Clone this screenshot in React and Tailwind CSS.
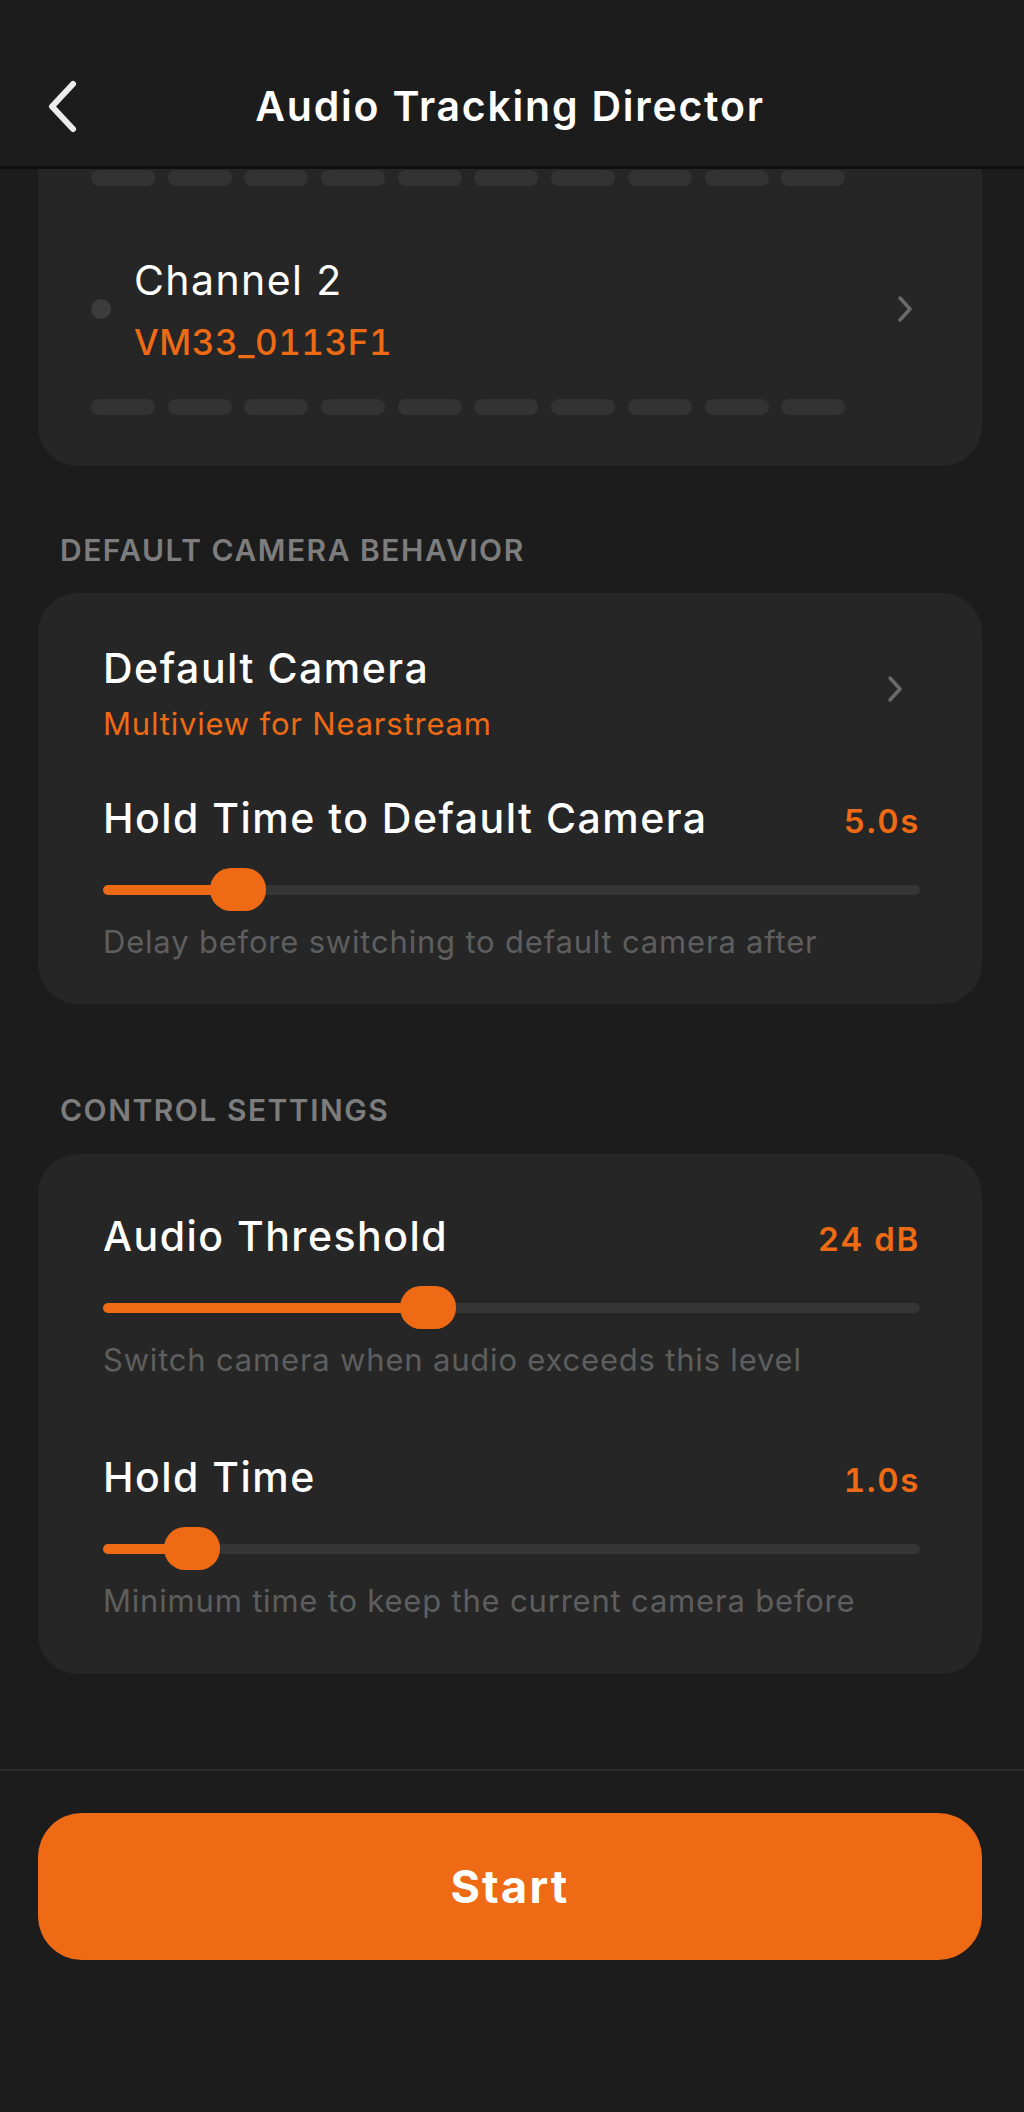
import React from 'react';

const Chevron = ({ className = '' }) => (
  <svg width="18" height="28" viewBox="0 0 18 28" className={className} fill="none">
    <path d="M4 3 L14 14 L4 25" stroke="#6a6a6a" strokeWidth="3.5" strokeLinecap="round" strokeLinejoin="round" />
  </svg>
);

const Dashes = () => (
  <div className="flex gap-[12.7px]">
    {Array.from({ length: 10 }).map((_, i) => (
      <div key={i} className="h-[16px] w-[64px] rounded-[8px] bg-[#333333]" />
    ))}
  </div>
);

const Slider = ({ percent }) => (
  <div className="relative h-[44px] w-full">
    <div className="absolute left-0 right-0 top-[17px] h-[10px] rounded-full bg-[#353535]" />
    <div className="absolute left-0 top-[17px] h-[10px] rounded-full bg-[#ee6a14]" style={{ width: `${percent}%` }} />
    <div
      className="absolute top-0 h-[43px] w-[56px] -translate-x-1/2 rounded-[21px] bg-[#ee6a14]"
      style={{ left: `${percent}%` }}
    />
  </div>
);

const SliderSetting = ({ title, value, percent, hint, className = '' }) => (
  <div className={className}>
    <div className="flex items-baseline justify-between">
      <span className="text-[41px] leading-[48px] font-medium tracking-[0.036em] text-white">{title}</span>
      <span className="text-[33px] leading-[40px] font-semibold tracking-[0.05em] tabular-nums text-[#ee6a14]">{value}</span>
    </div>
    <div className="mt-[26px]">
      <Slider percent={percent} />
    </div>
    <p className="mt-[12px] text-[31px] leading-[36px] tracking-[0.026em] text-[#5e5e5e]">{hint}</p>
  </div>
);

const SectionLabel = ({ children, className = '' }) => (
  <div className={`ml-[22px] text-[30px] leading-[34px] font-semibold tracking-[0.05em] text-[#7d7d7d] ${className}`}>
    {children}
  </div>
);

export default function App() {
  return (
    <div
      className="min-h-[2112px] w-full bg-[#1c1c1c] text-white"
      style={{ fontFamily: 'Inter, "Noto Sans", sans-serif' }}
    >
      {/* top bar */}
      <header className="grid h-[169px] grid-cols-[1fr_auto_1fr] items-center border-b-[3px] border-[#101010] pt-[45px] pr-[4px]">
        <div className="pl-[40px]">
          <svg width="40" height="60" viewBox="0 0 40 60" fill="none">
            <path d="M33 8 L12 30.5 L33 53" stroke="#ececec" strokeWidth="6" strokeLinecap="round" strokeLinejoin="round" />
          </svg>
        </div>
        <h1 className="text-[41px] leading-[48px] font-semibold tracking-[0.043em] text-white">Audio Tracking Director</h1>
        <div />
      </header>

      <main className="ml-[38px] mr-[42px] pb-[95px]">
        {/* channel card, scrolled partly under header */}
        <div className="rounded-b-[40px] bg-[#262626] pt-[1px] pb-[51px] pl-[53px] pr-[68px]">
          <Dashes />
          <div className="mt-[70px] flex items-center justify-between">
            <div className="flex items-center gap-[23px]">
              <div className="h-[20px] w-[20px] rounded-full bg-[#3c3c3c]" />
              <div>
                <div className="text-[41px] leading-[48px] tracking-[0.034em] text-white">Channel 2</div>
                <div className="mt-[18px] text-[35px] leading-[40px] font-medium tracking-[0.015em] tabular-nums text-[#ee6a14]">
                  VM33_0113F1
                </div>
              </div>
            </div>
            <Chevron />
          </div>
          <div className="mt-[37px]">
            <Dashes />
          </div>
        </div>

        <SectionLabel className="mt-[67px]">DEFAULT CAMERA BEHAVIOR</SectionLabel>

        <div className="mt-[26px] rounded-[40px] bg-[#262626] pt-[51px] pb-[44px] pl-[65px] pr-[62px]">
          <div className="flex items-center justify-between">
            <div>
              <div className="text-[41px] leading-[48px] font-medium tracking-[0.037em] text-white">Default Camera</div>
              <div className="mt-[14px] text-[31px] leading-[36px] tracking-[0.026em] text-[#ee6a14]">
                Multiview for Nearstream
              </div>
            </div>
            <Chevron className="mr-[16px] mb-[8px]" />
          </div>
          <SliderSetting
            className="mt-[52px]"
            title="Hold Time to Default Camera"
            value="5.0s"
            percent={16.5}
            hint="Delay before switching to default camera after"
          />
        </div>

        <SectionLabel className="mt-[89px]">CONTROL SETTINGS</SectionLabel>

        <div className="mt-[27px] rounded-[40px] bg-[#262626] pt-[58px] pb-[55px] pl-[65px] pr-[62px]">
          <SliderSetting
            title="Audio Threshold"
            value="24 dB"
            percent={39.8}
            hint="Switch camera when audio exceeds this level"
          />
          <SliderSetting
            className="mt-[75px]"
            title="Hold Time"
            value="1.0s"
            percent={10.9}
            hint="Minimum time to keep the current camera before"
          />
        </div>
      </main>

      <footer className="border-t-2 border-[#2c2c2c] pt-[42px]">
        <div className="ml-[38px] mr-[42px]">
          <button className="flex h-[147px] w-full items-center justify-center rounded-[44px] bg-[#ee6a14] text-[45px] font-bold tracking-[0.05em] text-white">
            Start
          </button>
        </div>
      </footer>
    </div>
  );
}
